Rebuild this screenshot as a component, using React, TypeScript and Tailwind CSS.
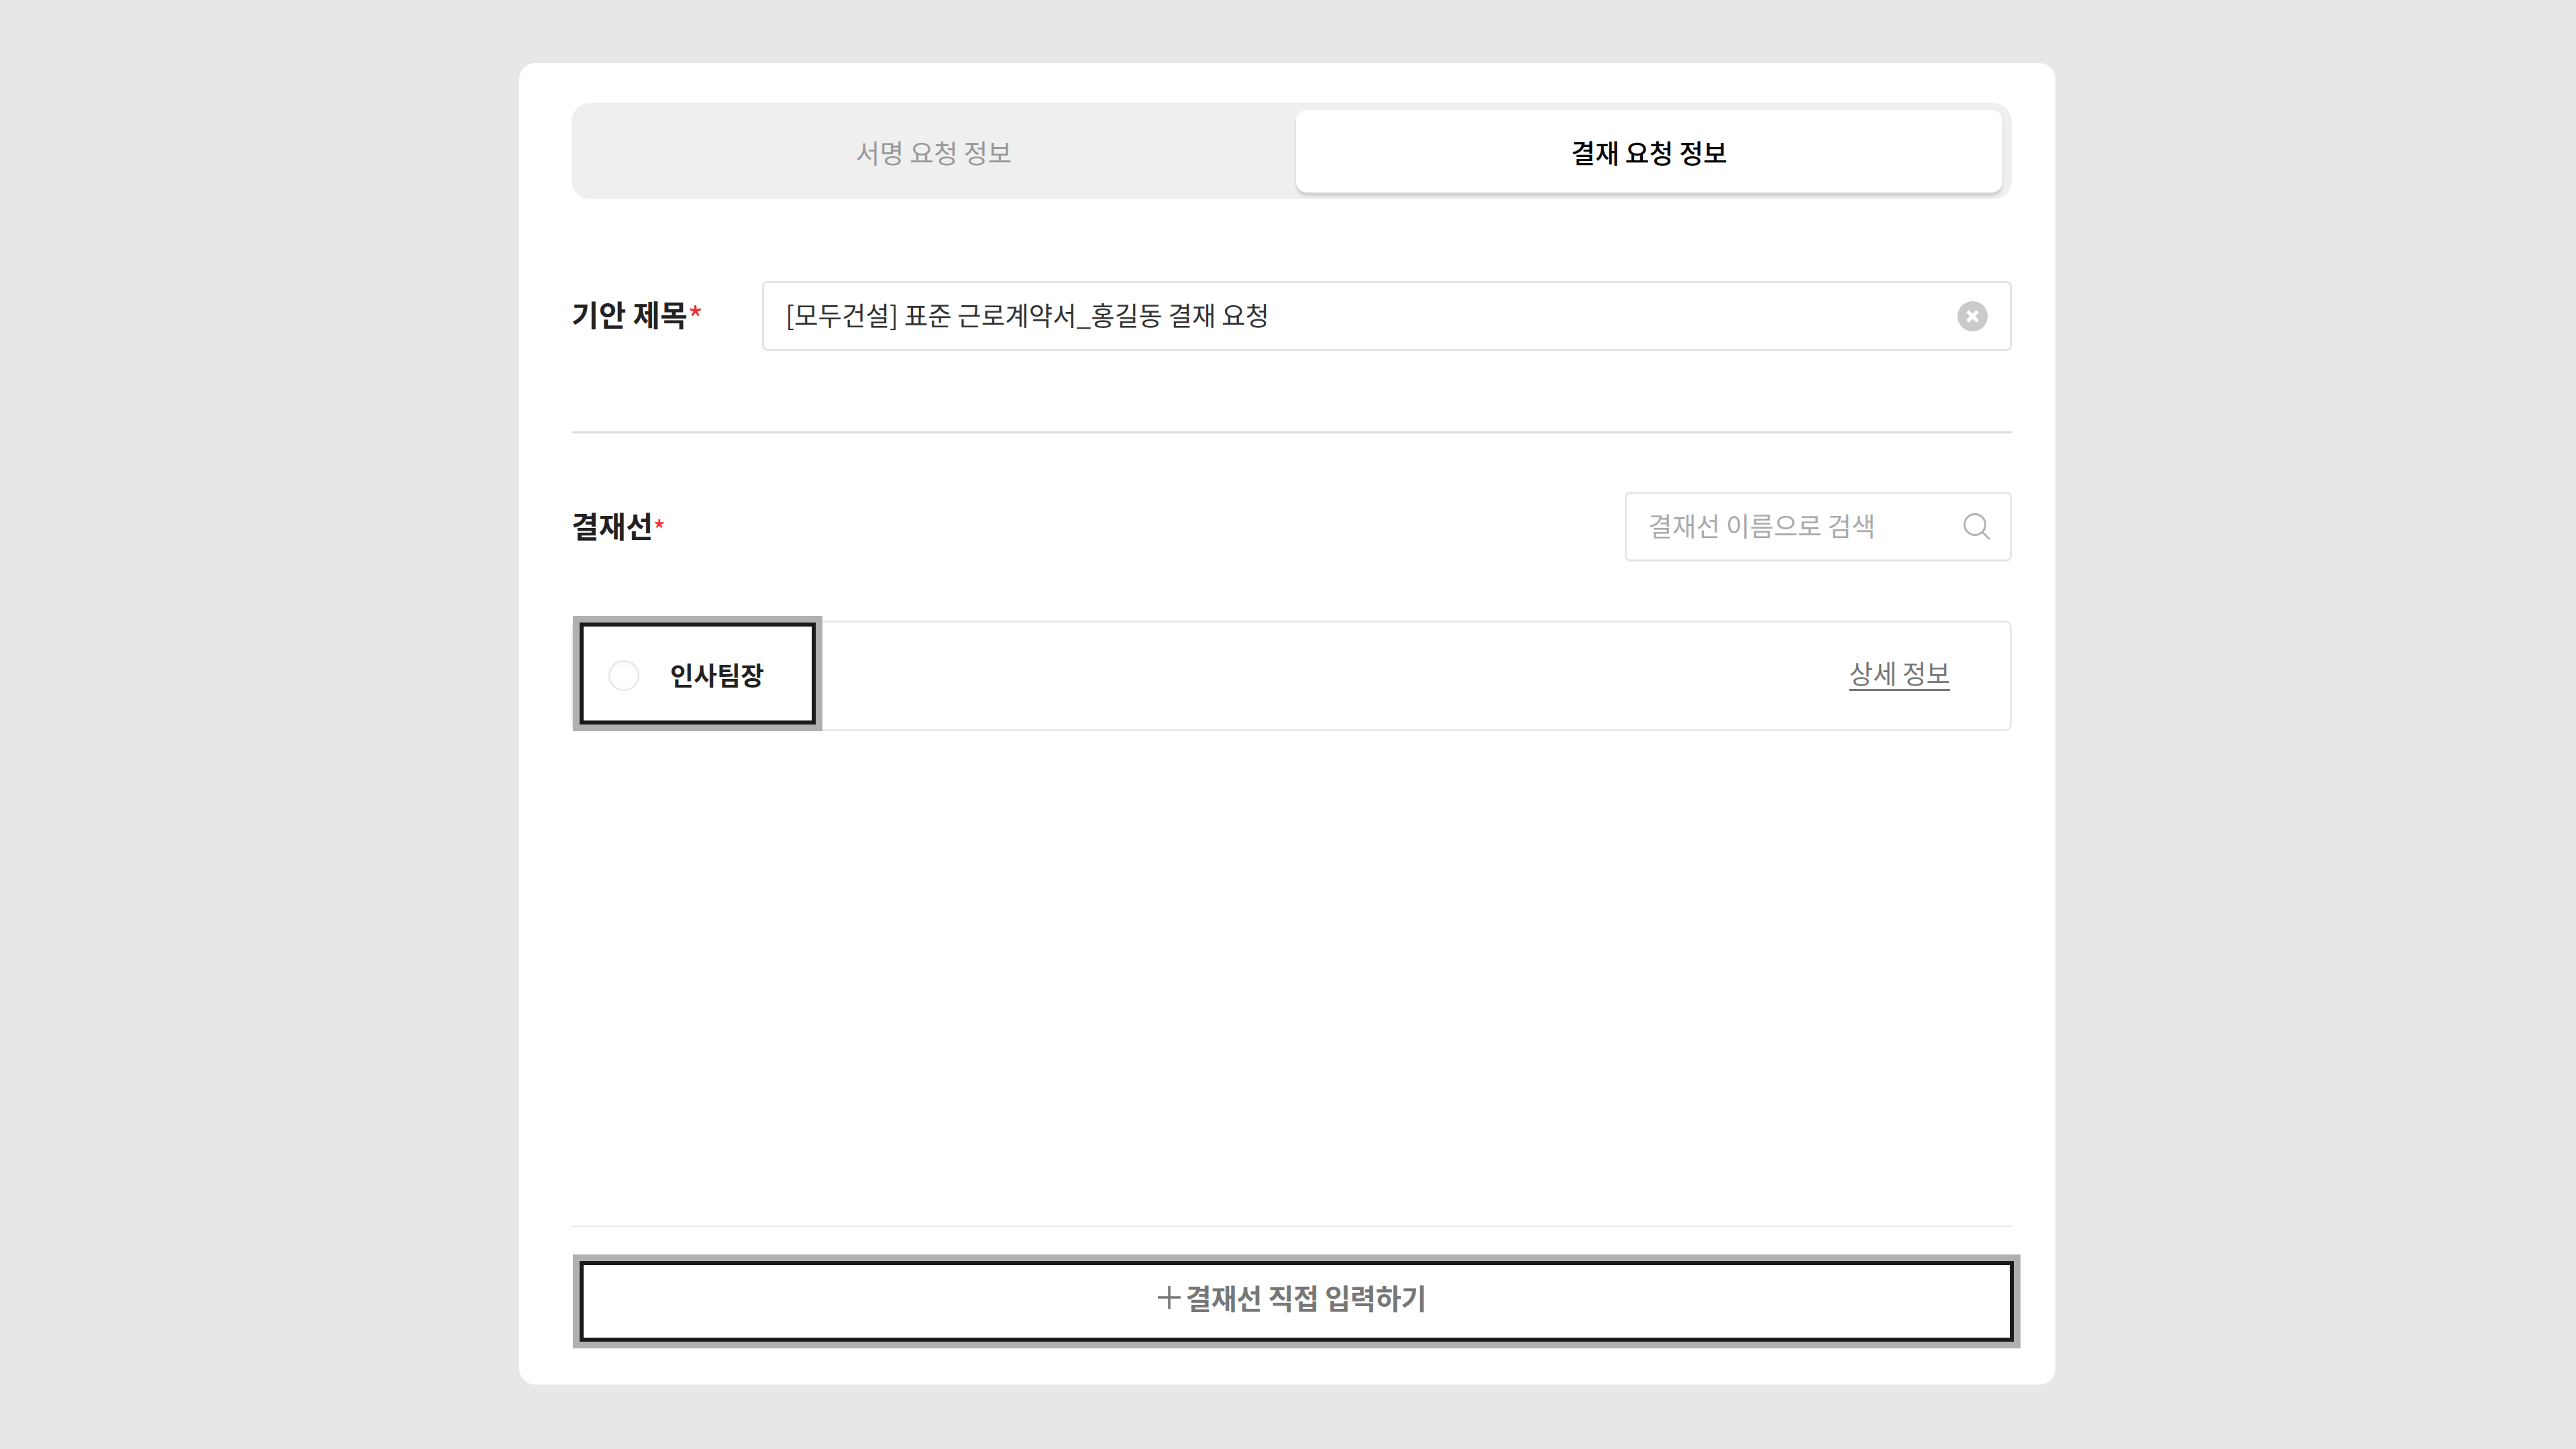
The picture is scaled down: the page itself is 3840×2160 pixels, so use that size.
const FONT = 'font-["Noto_Sans_CJK_KR","Noto_Sans",sans-serif]';

export default function App() {
  return (
    <div className={`min-h-screen bg-[#e7e7e7] pt-[94px] ${FONT}`}>
      <div className="ml-[774px] h-[1970px] w-[2290px] rounded-[24px] bg-white pl-[78px] pr-[65px] pt-[59px]">
        {/* Tabs */}
        <div className="flex h-[144px] rounded-[28px] bg-[#efefef] pb-[10px] pr-[14px] pt-[11px]">
          <button className="w-[1080px] pt-[2px] text-[39px] text-[#999999]">서명 요청 정보</button>
          <button className="flex-1 rounded-[16px] bg-white pt-[2px] text-[39px] font-medium text-black shadow-[0_5px_4px_rgba(0,0,0,0.14)]">
            결재 요청 정보
          </button>
        </div>

        {/* Title */}
        <div className="mt-[122px] flex items-center">
          <div className="mb-[6px] flex w-[284px] items-center text-[44px] font-bold leading-none tracking-[0.2px] text-[#222222]">
            기안 제목<span className="mt-[10px] text-[50px] font-normal text-[#f03030]">*</span>
          </div>
          <div className="flex h-[104px] flex-1 items-center rounded-[8px] border-[3px] border-[#e4e4e4] pl-[32px] pr-[33px]">
            <input
              readOnly
              value="[모두건설] 표준 근로계약서_홍길동 결재 요청"
              className="mb-[4px] min-w-0 flex-1 text-[38.6px] text-[#333333] outline-none"
            />
            <svg viewBox="0 0 45 45" className="h-[45px] w-[45px] shrink-0">
              <circle cx="22.5" cy="22.5" r="22.5" fill="#cacaca" />
              <path d="M15 15L30 30M30 15L15 30" stroke="#fff" strokeWidth="5.5" />
            </svg>
          </div>
        </div>

        <div className="mt-[120px] h-[3px] bg-[#dddddd]" />

        {/* Approval line */}
        <div className="mt-[87px] flex items-center justify-between">
          <div className="mb-[5px] flex items-center text-[44px] font-bold leading-none text-[#222222]">
            결재선<span className="mt-[12px] text-[40px] font-normal text-[#f03030]">*</span>
          </div>
          <div className="flex h-[104px] w-[577px] items-center rounded-[8px] border-[3px] border-[#e6e6e6] pl-[32px] pr-[29px]">
            <input
              readOnly
              placeholder="결재선 이름으로 검색"
              className="mb-[5px] min-w-0 flex-1 text-[38.8px] outline-none placeholder:text-[#aaaaaa]"
            />
            <svg viewBox="0 0 40 40" fill="none" className="h-[40px] w-[40px] shrink-0">
              <circle cx="17" cy="17" r="15.5" stroke="#b4b4b4" strokeWidth="3" />
              <path d="M28 28L39 39" stroke="#b4b4b4" strokeWidth="3" />
            </svg>
          </div>
        </div>

        <div className="mt-[88px] flex h-[165px] items-start rounded-[10px] border-[3px] border-[#e8e8e8] pl-[9px]">
          <div className="flex h-[152px] w-[352px] items-center border-[6px] border-[#1a1a1a] bg-white pl-[37px] shadow-[0_0_0_10px_#b0b0b0]">
            <span className="mt-[6px] h-[46px] w-[46px] rounded-full border-[2px] border-[#e4e4e4] shadow-[inset_0_2px_4px_rgba(0,0,0,0.06)]" />
            <span className="ml-[46px] text-[38px] font-bold text-[#222222]">인사팀장</span>
          </div>
          <a className="ml-auto mr-[89px] mt-[47px] text-[38.6px] leading-[54px] text-[#777777] underline underline-offset-[8px]">
            상세 정보
          </a>
        </div>

        <div className="mt-[737px] h-[2px] bg-[#e8e8e8]" />

        <button className="ml-[12px] mt-[51px] flex h-[120px] w-[2138px] shrink-0 items-center justify-center border-[6px] border-[#1a1a1a] bg-white pb-[12px] pr-[14px] text-[41.6px] font-bold tracking-[-0.4px] text-[#777777] shadow-[0_0_0_10px_#b0b0b0]">
          <svg viewBox="0 0 34 34" className="mr-[8px] h-[34px] w-[34px]">
            <path d="M17 0V34M0 17H34" stroke="#777777" strokeWidth="3.5" />
          </svg>
          결재선 직접 입력하기
        </button>
      </div>
    </div>
  );
}
